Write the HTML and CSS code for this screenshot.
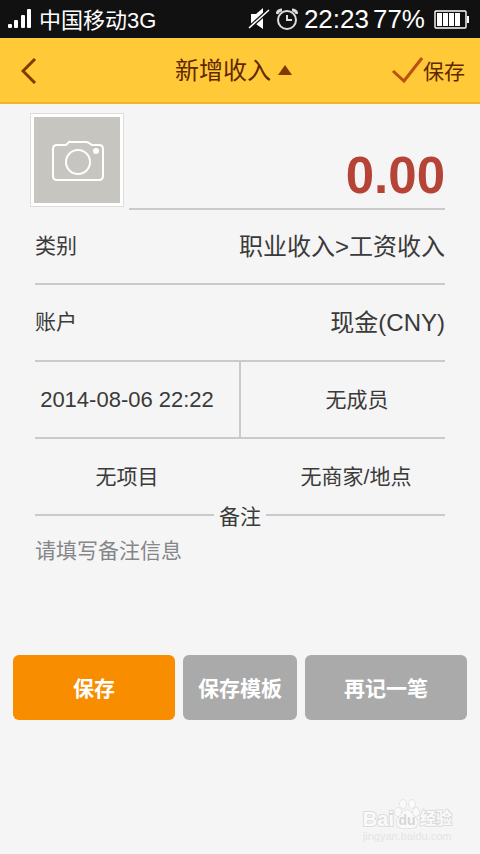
FILE: index.html
```html
<!DOCTYPE html>
<html lang="zh-CN">
<head>
    <meta charset="UTF-8">
    <meta name="viewport" content="width=device-width, initial-scale=1.0">
    <title>新增收入</title>
    <link rel="stylesheet" href="styles.css">
</head>
<body>
    <div class="status">
        <svg class="signal" width="24" height="20" viewBox="0 0 24 20" fill="#fff">
            <rect x="0" y="15" width="4" height="4" rx="1"/>
            <rect x="6" y="11" width="4" height="8" rx="1"/>
            <rect x="13" y="6" width="4" height="13" rx="1"/>
            <rect x="19" y="0" width="4" height="19" rx="1"/>
        </svg>
        <span class="carrier">中国移动3G</span>
        <svg class="mute" width="22" height="22" viewBox="0 0 22 22">
            <path d="M3 6h5l7-6v21l-7-5H3z" fill="#fff"/>
            <path d="M1 20L21 2" stroke="#111" stroke-width="4"/>
            <path d="M1 20L21 2" stroke="#fff" stroke-width="1.6"/>
        </svg>
        <svg class="alarm" width="22" height="22" viewBox="0 0 22 22" fill="none" stroke="#ddd" stroke-width="2">
            <circle cx="11" cy="12" r="9"/>
            <path d="M11 7v5h5"/>
            <path d="M1 6q1-4 5-4M21 6q-1-4-5-4" stroke-width="3"/>
        </svg>
        <span class="clock">22:23</span>
        <span class="percent">77%</span>
        <svg class="battery" width="35" height="20" viewBox="0 0 35 20">
            <rect x="1" y="2" width="31" height="17" rx="1" fill="none" stroke="#fff" stroke-width="1.4"/>
            <path d="M33 7h2v7h-2z" fill="#fff"/>
            <path d="M3 4h5v13H3zM9 4h5v13H9zM15 4h5v13h-5zM21 4h5v13h-5z" fill="#fff"/>
        </svg>
    </div>

    <header class="header">
        <button type="button" class="back" aria-label="返回">
            <svg width="16" height="26" viewBox="0 0 16 26" fill="none" stroke="#7d3b00" stroke-width="3">
                <path d="M14 1L2 13l12 12"/>
            </svg>
        </button>
        <button type="button" class="title"><span>新增收入</span>
            <svg width="14" height="10" viewBox="0 0 14 10"><path d="M7 0l7 10H0z" fill="#7d3b00"/></svg>
        </button>
        <button type="button" class="done">
            <svg width="32" height="28" viewBox="0 0 32 28" fill="none" stroke="#bb5010" stroke-width="3">
                <path d="M2 15l11 10L31 2"/>
            </svg>保存
        </button>
    </header>

    <form class="form">
        <div class="money">
            <button type="button" class="photo" aria-label="添加照片">
                <svg width="52" height="42" viewBox="0 0 52 42" fill="none" stroke="#fff" stroke-width="2">
                    <path d="M5 5h8q2 0 3-2t3-1h15q2 0 3 1t3 2h7q4 0 4 4v27q0 4-4 4H5q-4 0-4-4V9q0-4 4-4z"/>
                    <circle cx="26" cy="22" r="12"/>
                    <circle cx="44" cy="11" r="3" fill="#fff" stroke="none"/>
                </svg>
            </button>
            <input type="text" class="amount" value="0.00" aria-label="金额">
        </div>
        <button type="button" class="row">
            <span>类别</span>
            <span class="value">职业收入&gt;工资收入</span>
        </button>
        <button type="button" class="row">
            <span>账户</span>
            <span class="value">现金(CNY)</span>
        </button>
        <div class="pair line">
            <button type="button" class="cell date">2014-08-06 22:22</button>
            <button type="button" class="cell">无成员</button>
        </div>
        <div class="pair">
            <button type="button" class="cell">无项目</button>
            <button type="button" class="cell">无商家/地点</button>
        </div>
        <label class="memo-label" for="memo"><span>备注</span></label>
        <textarea id="memo" class="memo" placeholder="请填写备注信息"></textarea>
    </form>

    <div class="actions">
        <button type="button" class="btn primary">保存</button>
        <button type="button" class="btn small">保存模板</button>
        <button type="button" class="btn">再记一笔</button>
    </div>

    <footer class="mark">
        <div class="mark-logo">
            <span>Bai</span>
            <svg width="26" height="30" viewBox="0 0 26 30" fill="#fafafa" stroke="#dedede" stroke-width="1.4">
                <path d="M13 11c4 0 5 4 8 7 4 4 3 11-3 11H8c-6 0-7-7-3-11 3-3 4-7 8-7z"/>
                <ellipse cx="4" cy="13" rx="3" ry="4"/>
                <ellipse cx="9" cy="5" rx="3" ry="4"/>
                <ellipse cx="18" cy="5" rx="3" ry="4"/>
                <ellipse cx="22" cy="13" rx="3" ry="4"/>
                <text x="13" y="26" text-anchor="middle" class="mark-du">du</text>
            </svg>
            <span class="mark-cn">经验</span>
        </div>
        <div class="mark-url">jingyan.baidu.com</div>
    </footer>
</body>
</html>
```

FILE: styles.css
```css
* {
    box-sizing: border-box;
}
body {
    margin: 0;
    min-height: 100vh;
    display: flex;
    flex-direction: column;
    background: #f5f5f5;
    color: #3a3a3a;
    font-family: "Liberation Sans", "Noto Sans CJK SC", sans-serif;
    font-size: 21px;
}
button, input, textarea {
    margin: 0;
    padding: 0;
    border: 0;
    background: none;
    color: inherit;
    font: inherit;
}

/* 状态栏 */
.status {
    display: flex;
    align-items: center;
    height: 38px;
    padding: 0 11px 0 8px;
    background: #111;
    color: #fff;
}
.carrier {
    margin-left: 7px;
    margin-right: auto;
    padding-bottom: 2px;
    font-size: 22px;
}
.alarm {
    margin: 0 6px;
}
.clock, .percent {
    font-size: 26px;
}
.percent {
    margin: 0 9px 0 4px;
}

/* 标题栏 */
.header {
    display: grid;
    grid-template-columns: 1fr auto 1fr;
    align-items: center;
    height: 66px;
    padding: 0 15px 0 2px;
    background: #ffc938;
    border-bottom: 2px solid #f0b52c;
    color: #602800;
}
.back, .done, .title {
    display: flex;
    align-items: center;
}
.back {
    padding: 2px 0 0 19px;
}
.title {
    gap: 7px;
    font-size: 24px;
}
.title span {
    padding-bottom: 4px;
}
.done {
    justify-self: end;
}

/* 表单 */
.form {
    padding: 9px 35px 0;
}
.money {
    display: flex;
    gap: 5px;
    height: 97px;
    margin-left: -5px;
}
.photo {
    display: flex;
    align-items: center;
    justify-content: center;
    flex: none;
    width: 94px;
    height: 94px;
    padding: 2px 0 0 1px;
    border: 1px solid #ddd;
    background: #c6c5c0;
    box-shadow: inset 0 0 0 3px #fff;
}
.amount {
    flex: 1;
    min-width: 0;
    padding-top: 30px;
    border-bottom: 2px solid #cacaca;
    color: #b54437;
    font-size: 51px;
    font-weight: bold;
    text-align: right;
}
.row {
    display: flex;
    align-items: center;
    justify-content: space-between;
    width: 100%;
    height: 75px;
    padding-bottom: 5px;
    border-bottom: 2px solid #cacaca;
}
.row + .row, .line {
    height: 77px;
}
.value {
    font-size: 24px;
}
.pair {
    display: grid;
    grid-template-columns: 204fr 206fr;
}
.pair + .pair {
    height: 75px;
}
.cell {
    padding: 0 20px 3px 0;
}
.cell + .cell {
    padding: 0 0 3px 28px;
}
.line {
    border-bottom: 2px solid #cacaca;
}
.line .cell + .cell {
    border-left: 2px solid #cacaca;
}
.line .date {
    padding-bottom: 0;
    font-size: 22px;
}
.memo-label {
    display: flex;
    align-items: center;
    gap: 5px;
    height: 2px;
}
.memo-label::before, .memo-label::after {
    content: "";
    flex: 1;
    height: 2px;
    background: #cacaca;
}
.memo {
    display: block;
    width: 100%;
    height: 121px;
    margin-top: 18px;
    resize: none;
}
.memo::placeholder {
    color: #85868a;
}

/* 底部按钮 */
.actions {
    display: flex;
    gap: 8px;
    padding: 0 13px;
}
.btn {
    flex: 162;
    height: 65px;
    padding-bottom: 2px;
    border-radius: 6px;
    background: #aaa;
    color: #fff;
    font-weight: bold;
    white-space: nowrap;
}
.btn.small {
    flex: 114;
}
.btn.primary {
    background: #f88d00;
}

/* 水印 */
.mark {
    align-self: flex-end;
    margin: auto 28px 11px 0;
    color: #fafafa;
}
.mark-logo {
    display: flex;
    align-items: flex-end;
    height: 30px;
    font-size: 20px;
    font-weight: bold;
    line-height: 20px;
    -webkit-text-stroke: 2px #dcdcdc;
    paint-order: stroke fill;
}
.mark-cn {
    font-size: 16px;
}
.mark-du {
    font-size: 14px;
    -webkit-text-stroke: 0;
    stroke: none;
    fill: #d6d6d6;
}
.mark-url {
    color: #e4e4e4;
    font-size: 11px;
    line-height: 14px;
}
```
